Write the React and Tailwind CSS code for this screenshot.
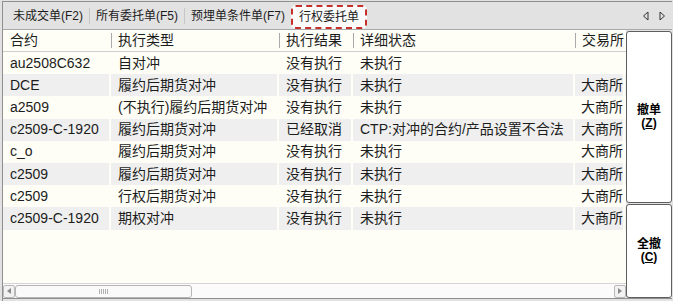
const rows = [
  ['au2508C632', '自对冲', '没有执行', '未执行', ''],
  ['DCE', '履约后期货对冲', '没有执行', '未执行', '大商所'],
  ['a2509', '(不执行)履约后期货对冲', '没有执行', '未执行', '大商所'],
  ['c2509-C-1920', '履约后期货对冲', '已经取消', 'CTP:对冲的合约/产品设置不合法', '大商所'],
  ['c_o', '履约后期货对冲', '没有执行', '未执行', '大商所'],
  ['c2509', '履约后期货对冲', '没有执行', '未执行', '大商所'],
  ['c2509', '行权后期货对冲', '没有执行', '未执行', '大商所'],
  ['c2509-C-1920', '期权对冲', '没有执行', '未执行', '大商所'],
]

const cols = ['w-[108px]', 'w-[168px]', 'w-[74px]', 'w-[222px]', 'w-[50px]']
const heads = ['合约', '执行类型', '执行结果', '详细状态', '交易所']

const Sep = () => <span className="mx-[6px] h-[16px] w-px bg-[#c6c6c6]" />

const TabArrows = () => (
  <div className="ml-auto mr-[6px] flex items-center gap-[10px]">
    <svg width="7" height="10" viewBox="0 0 7 10">
      <path d="M6 1 L1.5 5 L6 9 Z" fill="none" stroke="#333" strokeWidth="1" />
    </svg>
    <svg width="7" height="10" viewBox="0 0 7 10">
      <path d="M1 1 L5.5 5 L1 9 Z" fill="none" stroke="#333" strokeWidth="1" />
    </svg>
  </div>
)

const SideButton = ({ label, hotkey, className }) => (
  <button className={`flex flex-col items-center justify-center rounded-[3px] border border-[#5f5f5f] bg-white text-[12px] font-bold leading-[13px] text-black ${className}`}>
    <span>{label}</span>
    <span>
      (<span className="underline">{hotkey}</span>)
    </span>
  </button>
)

export default function App() {
  return (
    <div className="flex h-[301px] w-[673px] flex-col overflow-hidden bg-[#e2e2e2] font-['Liberation_Sans','Noto_Sans_CJK_SC',sans-serif] text-[#1c1c1c]">
      <div className="ml-[2px] mr-[1px] mt-[1px] flex flex-1 flex-col border-l border-t border-[#8f8f8f]">
        {/* tabs */}
        <div className="flex h-[28px] items-center border-b border-[#a9a9a9] pl-[10px] text-[12px]">
          <span>未成交单(F2)</span>
          <Sep />
          <span>所有委托单(F5)</span>
          <Sep />
          <span>预埋单条件单(F7)</span>
          <div className="ml-[6px] mt-[3px] flex h-[24px] items-center rounded-[5px] border-2 border-dashed border-[#c5302b] bg-[#fbfbfb] px-[6px] text-[12px]">
            行权委托单
          </div>
          <TabArrows />
        </div>

        <div className="flex flex-1">
          {/* grid */}
          <div className="flex w-[623px] flex-col bg-[#fefef6] text-[14px]">
            <div className="flex h-[22px] items-center border-b border-[#cfcfcf]">
              {heads.map((h, i) => (
                <div key={h} className={`${cols[i]} flex shrink-0 items-center overflow-hidden whitespace-nowrap`}>
                  {i > 0 && <span className="h-[15px] w-px shrink-0 bg-[#a9a9a9]" />}
                  <span className={i > 0 ? 'pl-[6px]' : 'pl-[7px]'}>{h}</span>
                </div>
              ))}
            </div>
            {rows.map((r, ri) => (
              <div key={ri} className={`flex h-[22.2px] ${ri % 2 ? 'bg-[#efefef]' : ''}`}>
                {r.map((c, ci) => (
                  <div
                    key={ci}
                    className={`${cols[ci]} flex shrink-0 items-center overflow-hidden whitespace-nowrap border-r-2 border-[#fefef6] ${ci === 4 ? 'justify-end pr-[0px]' : 'pl-[7px]'}`}
                  >
                    {c}
                  </div>
                ))}
              </div>
            ))}
            <div className="flex-1" />
            {/* horizontal scrollbar */}
            <div className="flex h-[15px] items-center border-t border-[#d6d6d6] bg-[#fbfbfb]">
              <div className="flex h-[13px] w-[12px] items-center justify-center rounded-[2px] border border-[#b9b9b9] bg-[#f2f2f2]">
                <svg width="4" height="6" viewBox="0 0 4 6"><path d="M4 0 L0 3 L4 6 Z" fill="#8a8a8a" /></svg>
              </div>
              <div className="flex h-[13px] w-[177px] items-center justify-center rounded-[3px] border border-[#b5b5b5] bg-[#fafafa]">
                <div className="flex gap-[1px]">
                  {[0, 1, 2, 3, 4].map(i => <span key={i} className="h-[5px] w-px bg-[#b0b0b0]" />)}
                </div>
              </div>
              <div className="ml-auto flex h-[13px] w-[12px] items-center justify-center rounded-[2px] border border-[#b9b9b9] bg-[#f2f2f2]">
                <svg width="4" height="6" viewBox="0 0 4 6"><path d="M0 0 L4 3 L0 6 Z" fill="#8a8a8a" /></svg>
              </div>
            </div>
          </div>

          {/* side buttons */}
          <div className="flex w-[46px] flex-col gap-[1px] pt-[1px]">
            <SideButton label="撤单" hotkey="Z" className="h-[172px]" />
            <SideButton label="全撤" hotkey="C" className="flex-1" />
          </div>
        </div>
        <div className="h-[1px] bg-[#8f8f8f]" />
        <div className="h-[2px]" />
      </div>
    </div>
  )
}
